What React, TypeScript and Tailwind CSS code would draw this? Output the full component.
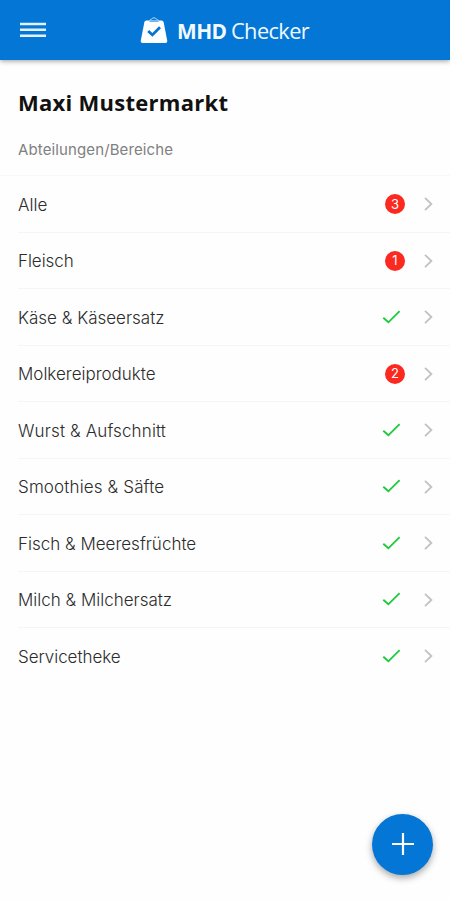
import React from "react";

type Department = { name: string; count: number; tracking: string };

const departments: Department[] = [
  { name: "Alle", count: 3, tracking: "tracking-[0px]" },
  { name: "Fleisch", count: 1, tracking: "tracking-[-0.05px]" },
  { name: "Käse & Käseersatz", count: 0, tracking: "tracking-[0px]" },
  { name: "Molkereiprodukte", count: 2, tracking: "tracking-[0px]" },
  { name: "Wurst & Aufschnitt", count: 0, tracking: "tracking-[0.14px]" },
  { name: "Smoothies & Säfte", count: 0, tracking: "tracking-[0.14px]" },
  { name: "Fisch & Meeresfrüchte", count: 0, tracking: "tracking-[0px]" },
  { name: "Milch & Milchersatz", count: 0, tracking: "tracking-[0px]" },
  { name: "Servicetheke", count: 0, tracking: "tracking-[-0.05px]" },
];

function MenuIcon() {
  return (
    <svg width="26" height="16" viewBox="0 0 26 16" fill="none" stroke="#e3f1fd" strokeWidth="2.5">
      <path d="M0 2h26M0 7.8h26M0 13.7h26" />
    </svg>
  );
}

function BagIcon() {
  return (
    <svg width="28" height="27" viewBox="0 0 28 27" fill="none">
      <path d="M6.5 3.5H21.5Q23.2 3.5 23.6 5.1L27.2 23.5Q27.5 26 25.2 26H2.8Q.5 26 .8 23.5L4.4 5.1Q4.8 3.5 6.5 3.5Z" fill="#fff" />
      <path d="M9.2 3.8Q10 2.4 11.6 2.2Q12.2.8 14 .8Q15.8.8 16.4 2.2Q18 2.4 18.8 3.8" stroke="#b9dcf8" strokeWidth="1" />
      <path d="M9.4 4.5H18.6" stroke="#6db3ef" strokeWidth="1" />
      <path d="M8.2 13.9L12.4 17.9L20 10.3" stroke="#0575d4" strokeWidth="2.8" />
    </svg>
  );
}

function Check() {
  return (
    <svg className="mr-[23px]" width="19" height="15" viewBox="0 0 19 15" fill="none" stroke="#20ca3d" strokeWidth="1.9">
      <path d="M1.3 7.7L6.4 12.3L17.6 1.2" />
    </svg>
  );
}

function Chevron() {
  return (
    <svg width="9" height="16" viewBox="0 0 9 16" fill="none" stroke="#c2c2c4" strokeWidth="1.8">
      <path d="M1 1.8L7.4 8L1 14.2" />
    </svg>
  );
}

export default function App() {
  return (
    <div className="relative h-[900px] w-[450px] overflow-hidden bg-[#fefefe] font-['Inter','Liberation_Sans',sans-serif]">
      <header className="flex h-[60px] items-center bg-[#0476d5] pl-5 shadow-[0_1px_5px_rgba(0,0,0,0.4)]">
        <MenuIcon />
        <div className="ml-[94px] flex items-center">
          <BagIcon />
          <h2 className="-mt-px ml-[9px] flex whitespace-nowrap font-['Open_Sans','Noto_Sans',sans-serif] text-[22px] leading-[30px] text-[#f2f9ff]">
            <span className="inline-block w-[54px] origin-left scale-x-[0.95] font-bold tracking-[-0.6px]">MHD</span>
            <span className="inline-block origin-left scale-x-[0.99] tracking-[-0.6px]">Checker</span>
          </h2>
        </div>
      </header>
      <main>
        <h1 className="mt-[27px] pl-[18px] font-['Open_Sans','Noto_Sans',sans-serif] text-[22px] font-bold leading-[30px] tracking-[0.27px] text-[#111]">
          Maxi Mustermarkt
        </h1>
        <p className="mt-[23px] pl-[18px] text-[15px] leading-5 tracking-[0.12px] text-[#808080]">Abteilungen/Bereiche</p>
        <ul className="mt-[15px] border-t border-[#f8f8f8]">
          {departments.map((d, i) => (
            <li key={d.name} className="h-[56.5px] pl-[18px]">
              <div
                className={`flex h-full items-center pr-[17px] pt-px ${
                  i < departments.length - 1 ? "border-b border-[#f5f5f5]" : "border-b border-transparent"
                }`}
              >
                <span className={`grow whitespace-nowrap pt-px text-[17px] font-light leading-6 text-[#2c2c2c] ${d.tracking}`}>{d.name}</span>
                {d.count > 0 ? (
                  <span className="mr-[19px] flex size-5 items-center justify-center rounded-full bg-[#fb2920] text-[13px] leading-none text-white">
                    {d.count}
                  </span>
                ) : (
                  <Check />
                )}
                <Chevron />
              </div>
            </li>
          ))}
        </ul>
      </main>
      <button
        aria-label="Hinzufügen"
        className="absolute left-[372px] top-[814px] flex size-[61px] items-center justify-center rounded-full bg-[#0476d5] pb-px shadow-[0_3px_7px_rgba(0,0,0,0.35)]"
      >
        <svg width="22" height="22" viewBox="0 0 22 22" stroke="#fff" strokeWidth="2.2">
          <path d="M11 0v22M0 11h22" />
        </svg>
      </button>
    </div>
  );
}
